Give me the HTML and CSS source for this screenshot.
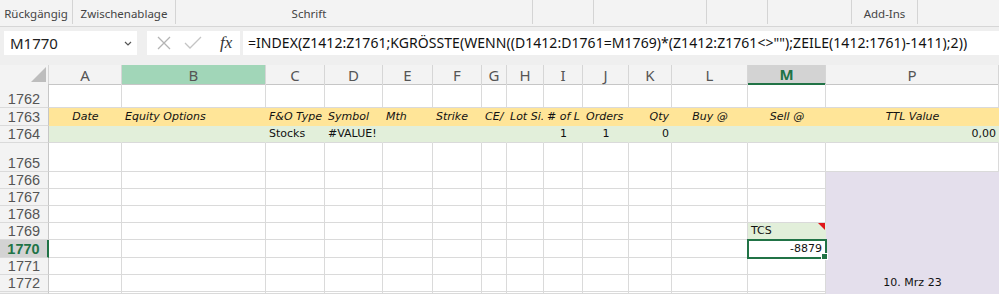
FILE: index.html
```html
<!DOCTYPE html>
<html lang="de">
<head>
    <meta charset="UTF-8">
    <title>Mappe1 - Excel</title>
    <link rel="stylesheet" href="styles.css">
</head>
<body>

<div class="ribbon">
    <div class="group g-undo"><span>Rückgängig</span></div>
    <div class="group g-clip"><span>Zwischenablage</span></div>
    <div class="group g-font"><span>Schrift</span></div>
    <div class="group g-w61"></div>
    <div class="group g-w113"></div>
    <div class="group g-w61"></div>
    <div class="group g-w84"></div>
    <div class="group g-addins"><span>Add-Ins</span></div>
    <div class="group g-last"></div>
</div>

<div class="formula-bar">
    <div class="name-box">
        <span>M1770</span>
        <svg class="chev" width="8" height="5" viewBox="0 0 8 5"><path d="M1 1 L4 4 L7 1" fill="none" stroke="#555" stroke-width="1.2"/></svg>
    </div>
    <div class="fx-box">
        <svg width="16" height="14" viewBox="0 0 16 14"><path d="M2 1 L14 13 M14 1 L2 13" stroke="#b4b4b4" stroke-width="1.3"/></svg>
        <svg width="18" height="14" viewBox="0 0 18 14"><path d="M1 7 L6 12 L17 1" fill="none" stroke="#c4c4c4" stroke-width="1.3"/></svg>
        <span class="fx">fx</span>
    </div>
    <div class="formula">=INDEX(Z1412:Z1761;KGRÖSSTE(WENN((D1412:D1761=M1769)*(Z1412:Z1761&lt;&gt;"");ZEILE(1412:1761)-1411);2))</div>
</div>

<div class="sheet">
    <div class="row colhead">
        <div class="corner"><svg width="15" height="15" viewBox="0 0 15 15"><path d="M15 0 L15 15 L0 15 Z" fill="#bdbdbd"/></svg></div>
        <div>A</div><div class="col-b">B</div><div>C</div><div>D</div><div>E</div><div>F</div><div>G</div>
        <div>H</div><div>I</div><div>J</div><div>K</div><div>L</div><div class="col-sel">M</div><div>P</div>
    </div>

    <div class="row h24">
        <div class="rh">1762</div>
        <div></div><div></div><div></div><div></div><div></div><div></div><div></div>
        <div></div><div></div><div></div><div></div><div></div><div></div><div></div>
    </div>

    <div class="row h18 yellow">
        <div class="rh">1763</div>
        <div class="center">Date</div><div>Equity Options</div><div>F&amp;O Type</div><div>Symbol</div><div>Mth</div><div>Strike</div><div>CE/</div>
        <div>Lot Si.</div><div># of L</div><div>Orders</div><div class="right">Qty</div><div class="center">Buy @</div><div class="center">Sell @</div><div class="center">TTL Value</div>
    </div>

    <div class="row h17 green">
        <div class="rh">1764</div>
        <div></div><div></div><div>Stocks</div><div>#VALUE!</div><div></div><div></div><div></div>
        <div></div><div class="center">1</div><div class="center">1</div><div class="right">0</div><div></div><div></div><div class="right">0,00</div>
    </div>

    <div class="row h29">
        <div class="rh">1765</div>
        <div></div><div></div><div></div><div></div><div></div><div></div><div></div>
        <div></div><div></div><div></div><div></div><div></div><div></div><div></div>
    </div>

    <div class="row h17">
        <div class="rh">1766</div>
        <div></div><div></div><div></div><div></div><div></div><div></div><div></div>
        <div></div><div></div><div></div><div></div><div></div><div></div><div class="lilac"></div>
    </div>

    <div class="row h17">
        <div class="rh">1767</div>
        <div></div><div></div><div></div><div></div><div></div><div></div><div></div>
        <div></div><div></div><div></div><div></div><div></div><div></div><div class="lilac"></div>
    </div>

    <div class="row h17">
        <div class="rh">1768</div>
        <div></div><div></div><div></div><div></div><div></div><div></div><div></div>
        <div></div><div></div><div></div><div></div><div></div><div></div><div class="lilac"></div>
    </div>

    <div class="row h17">
        <div class="rh">1769</div>
        <div></div><div></div><div></div><div></div><div></div><div></div><div></div>
        <div></div><div></div><div></div><div></div><div></div><div class="tcs">TCS<span class="note"></span></div><div class="lilac"></div>
    </div>

    <div class="row h18">
        <div class="rh rh-sel">1770</div>
        <div></div><div></div><div></div><div></div><div></div><div></div><div></div>
        <div></div><div></div><div></div><div></div><div></div><div class="right active">-8879<span class="handle"></span></div><div class="lilac"></div>
    </div>

    <div class="row h17">
        <div class="rh">1771</div>
        <div></div><div></div><div></div><div></div><div></div><div></div><div></div>
        <div></div><div></div><div></div><div></div><div></div><div></div><div class="lilac"></div>
    </div>

    <div class="row h17">
        <div class="rh">1772</div>
        <div></div><div></div><div></div><div></div><div></div><div></div><div></div>
        <div></div><div></div><div></div><div></div><div></div><div></div><div class="lilac center">10. Mrz 23</div>
    </div>

    <div class="row h2">
        <div class="rh"></div>
        <div></div><div></div><div></div><div></div><div></div><div></div><div></div>
        <div></div><div></div><div></div><div></div><div></div><div></div><div class="lilac"></div>
    </div>
</div>

</body>
</html>
```

FILE: styles.css
```css
body {
    margin: 0;
    background-color: #fff;
    font-family: 'Noto Sans', sans-serif;
    overflow: hidden;
}

/* ribbon group labels */
.ribbon {
    display: flex;
    height: 26px;
    background-color: #f3f3f3;
    border-bottom: 1px solid #d6d6d6;
    font-size: 11.5px;
    color: #444;
}
.group {
    display: flex;
    align-items: flex-end;
    justify-content: center;
    padding-bottom: 3px;
    box-sizing: border-box;
    border-right: 1px solid #d4d4d4;
    height: 24px;
}
.g-undo { width: 73px; }
.g-clip { width: 103px; }
.g-font { width: 357px; padding-right: 90px; }
.g-w61 { width: 61px; }
.g-w113 { width: 113px; }
.g-w84 { width: 84px; }
.g-addins { width: 66px; }
.g-last { flex: 1; border-right: none; }

/* name box + formula */
.formula-bar {
    display: flex;
    height: 38px;
    padding-top: 4px;
    box-sizing: border-box;
    background-color: #efefef;
}
.name-box {
    display: flex;
    align-items: center;
    justify-content: space-between;
    width: 133px;
    height: 24px;
    margin-left: 4px;
    padding: 0 5px 0 6px;
    box-sizing: border-box;
    background-color: #fff;
    font-size: 15px;
    color: #222;
}
.fx-box {
    display: flex;
    align-items: center;
    gap: 12px;
    width: 93px;
    height: 24px;
    margin-left: 10px;
    padding-left: 9px;
    box-sizing: border-box;
    background-color: #fff;
}
.fx {
    font-family: 'Liberation Serif', serif;
    font-style: italic;
    font-size: 17px;
    color: #333;
    margin-left: 6px;
}
.formula {
    flex: 1;
    height: 24px;
    margin-left: 3px;
    padding-left: 5px;
    box-sizing: border-box;
    background-color: #fff;
    font-size: 14px;
    line-height: 23px;
    letter-spacing: 0.05px;
    color: #111;
    white-space: nowrap;
}

/* grid */
.row {
    display: grid;
    grid-template-columns: 49px 73px 144px 59px 58px 50px 49px 25px 37px 39px 46px 43px 76px 78px 1fr;
}
.row > div {
    position: relative;
    box-sizing: border-box;
    border-right: 1px solid #dadada;
    border-bottom: 1px solid #dadada;
    font-family: 'DejaVu Sans', Verdana, sans-serif;
    font-size: 11px;
    line-height: 14px;
    color: #111;
    white-space: nowrap;
    overflow: hidden;
    display: flex;
    align-items: flex-end;
    padding: 0 2px 1px 3px;
}
.h2 { height: 2px; }
.h17 { height: 17px; }
.h18 { height: 18px; }
.h24 { height: 24px; }
.h29 { height: 29px; }

.colhead { height: 19px; }
.colhead > div {
    background-color: #f3f3f3;
    border-right-color: #d6d6d6;
    border-bottom-color: #c6c6c6;
    font-family: 'Noto Sans', sans-serif;
    font-size: 15px;
    line-height: 18px;
    color: #555;
    justify-content: center;
    align-items: center;
    padding: 0;
    overflow: visible;
}
.colhead .corner {
    justify-content: flex-end;
    padding-right: 2px;
}
.colhead .col-b { background-color: #a1d6b8; }
.colhead .col-sel {
    background-color: #d3d3d3;
    border-bottom: 2px solid #217346;
    font-weight: bold;
    color: #217346;
}

.row > .rh {
    background-color: #f3f3f3;
    border-right-color: #c6c6c6;
    border-bottom-color: #dadada;
    font-family: 'Liberation Sans', Arial, sans-serif;
    font-size: 14.5px;
    color: #555;
    justify-content: center;
    padding: 0;
    line-height: 15px;
}
.row > .rh-sel {
    background-color: #d3d3d3;
    border-right: 2px solid #217346;
    font-weight: bold;
    color: #217346;
}

.center { justify-content: center; }
.row > .right { justify-content: flex-end; }

.yellow > div:not(.rh) {
    background-color: #ffe598;
    border-color: transparent;
    font-style: italic;
}
.green > div:not(.rh) {
    background-color: #e2efda;
    border-right-color: transparent;
}
.row > .lilac {
    background-color: #e4dfec;
    border-color: transparent;
}
.row > .tcs {
    background-color: #e2efda;
    border-right-color: transparent;
}
.note {
    position: absolute;
    top: 0;
    right: 0;
    border-top: 7px solid #e0161b;
    border-left: 7px solid transparent;
}
.row > .active {
    overflow: visible;
    outline: 2px solid #217346;
    outline-offset: -1px;
    z-index: 1;
    padding-right: 3px;
}
.handle {
    position: absolute;
    right: -3px;
    bottom: -3px;
    width: 5px;
    height: 5px;
    background-color: #217346;
    border: 1px solid #fff;
}
```
